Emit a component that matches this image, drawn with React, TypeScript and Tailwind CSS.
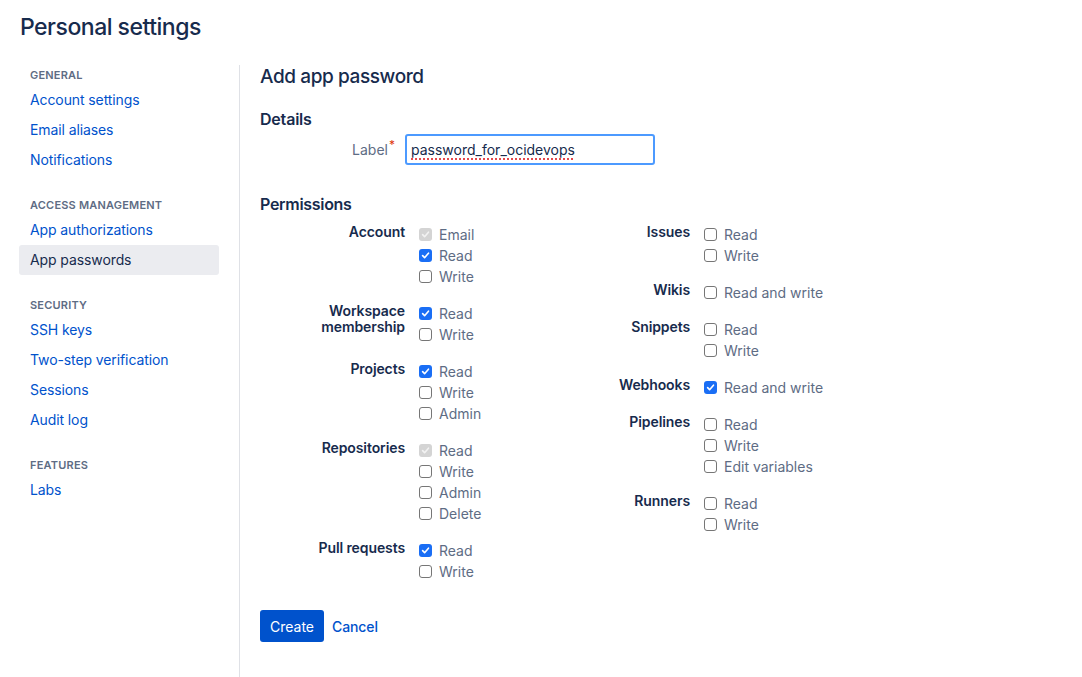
import React from 'react'

type Opt = { label: string; checked?: boolean; disabled?: boolean }
type Group = { title: string[]; options: Opt[] }

const leftGroups: Group[] = [
  { title: ['Account'], options: [{ label: 'Email', checked: true, disabled: true }, { label: 'Read', checked: true }, { label: 'Write' }] },
  { title: ['Workspace', 'membership'], options: [{ label: 'Read', checked: true }, { label: 'Write' }] },
  { title: ['Projects'], options: [{ label: 'Read', checked: true }, { label: 'Write' }, { label: 'Admin' }] },
  { title: ['Repositories'], options: [{ label: 'Read', checked: true, disabled: true }, { label: 'Write' }, { label: 'Admin' }, { label: 'Delete' }] },
  { title: ['Pull requests'], options: [{ label: 'Read', checked: true }, { label: 'Write' }] },
]

const rightGroups: Group[] = [
  { title: ['Issues'], options: [{ label: 'Read' }, { label: 'Write' }] },
  { title: ['Wikis'], options: [{ label: 'Read and write' }] },
  { title: ['Snippets'], options: [{ label: 'Read' }, { label: 'Write' }] },
  { title: ['Webhooks'], options: [{ label: 'Read and write', checked: true }] },
  { title: ['Pipelines'], options: [{ label: 'Read' }, { label: 'Write' }, { label: 'Edit variables' }] },
  { title: ['Runners'], options: [{ label: 'Read' }, { label: 'Write' }] },
]

const nav = [
  { heading: 'GENERAL', items: ['Account settings', 'Email aliases', 'Notifications'] },
  { heading: 'ACCESS MANAGEMENT', items: ['App authorizations', 'App passwords'] },
  { heading: 'SECURITY', items: ['SSH keys', 'Two-step verification', 'Sessions', 'Audit log'] },
  { heading: 'FEATURES', items: ['Labs'] },
]

function Checkbox({ checked, disabled }: { checked?: boolean; disabled?: boolean }) {
  if (checked) {
    return (
      <span
        className={
          'flex h-[13px] w-[13px] items-center justify-center rounded-[3px] ' +
          (disabled ? 'bg-[#d4d4d4]' : 'bg-[#1a6ef5]')
        }
      >
        <svg width="9" height="9" viewBox="0 0 10 10" fill="none">
          <path
            d="M1.8 5.2 L4 7.4 L8.3 2.4"
            stroke={disabled ? '#f2f2f2' : '#ffffff'}
            strokeWidth="1.8"
            strokeLinecap="round"
            strokeLinejoin="round"
          />
        </svg>
      </span>
    )
  }
  return <span className="block h-[13px] w-[13px] rounded-[3px] border border-[#767676] bg-white" />
}

function PermGroup({ group }: { group: Group }) {
  return (
    <div className="flex">
      <div className="w-[145px] text-right text-[14px] font-semibold leading-4 tracking-[-0.1px] text-[#172b4d]">
        {group.title.map((t) => (
          <div key={t}>{t}</div>
        ))}
      </div>
      <div className="ml-[14px] flex flex-col">
        {group.options.map((o) => (
          <div key={o.label} className="flex h-[21px] items-center">
            <Checkbox checked={o.checked} disabled={o.disabled} />
            <span className="ml-[7px] text-[14px] text-[#5e6c84]">{o.label}</span>
          </div>
        ))}
      </div>
    </div>
  )
}

export default function App() {
  return (
    <div className="min-h-[677px] bg-white font-['Inter',sans-serif] text-[#172b4d]">
      <h1 className="px-5 pt-[13px] text-[23px] font-medium leading-7 tracking-[-0.5px] text-[#172b4d]">
        Personal settings
      </h1>

      <div className="mt-[24px] flex">
        {/* Sidebar */}
        <nav className="ml-[19px] w-[220px] pr-[20px] pt-[2px]">
          {nav.map((section, i) => (
            <div key={section.heading} className={i > 0 ? 'mt-[22px]' : ''}>
              <div className="px-[11px] text-[11px] font-semibold leading-4 tracking-[0.2px] text-[#5e6c84]">
                {section.heading}
              </div>
              <div className="mt-[2px]">
                {section.items.map((item) => {
                  const active = item === 'App passwords'
                  return (
                    <div
                      key={item}
                      className={
                        'rounded-[3px] px-[11px] py-[5px] text-[14px] leading-5 tracking-[-0.1px] ' +
                        (active ? 'bg-[#ebecf0] text-[#172b4d]' : 'text-[#0052cc]')
                      }
                    >
                      {item}
                    </div>
                  )
                })}
              </div>
            </div>
          ))}
        </nav>

        {/* Main */}
        <main className="min-h-[612px] flex-1 border-l border-[#dfe1e6] pl-5">
          <h2 className="text-[19px] font-medium leading-6 tracking-[-0.4px] text-[#172b4d]">Add app password</h2>

          <h3 className="mt-[20px] text-[16px] font-semibold leading-5 tracking-[-0.2px] text-[#172b4d]">Details</h3>
          <div className="mt-[5px] flex items-center">
            <div className="w-[145px] pr-[10px] text-right text-[14px] text-[#5e6c84]">
              Label<sup className="ml-[1px] text-[12px] text-[#de350b]">*</sup>
            </div>
            <div className="flex h-[31px] w-[250px] items-center rounded-[3px] border-2 border-[#4c9aff] bg-white px-[4px] text-[14px] text-[#172b4d]">
              <span className="underline decoration-[#e5484d] decoration-dotted decoration-2 underline-offset-[3px]">
                password_for_ocidevops
              </span>
            </div>
          </div>

          <h3 className="mt-[29px] text-[16px] font-semibold leading-5 tracking-[-0.3px] text-[#172b4d]">Permissions</h3>
          <div className="mt-[10px] flex">
            <div className="flex w-[285px] flex-col gap-4">
              {leftGroups.map((g) => (
                <PermGroup key={g.title.join(' ')} group={g} />
              ))}
            </div>
            <div className="flex w-[300px] flex-col gap-4">
              {rightGroups.map((g) => (
                <PermGroup key={g.title.join(' ')} group={g} />
              ))}
            </div>
          </div>

          <div className="mt-[28px] flex items-center gap-[8px]">
            <button className="h-8 rounded-[3px] bg-[#0052cc] px-[10px] text-[14px] text-white">Create</button>
            <button className="text-[14px] font-medium tracking-[-0.1px] text-[#0052cc]">Cancel</button>
          </div>
        </main>
      </div>
    </div>
  )
}
